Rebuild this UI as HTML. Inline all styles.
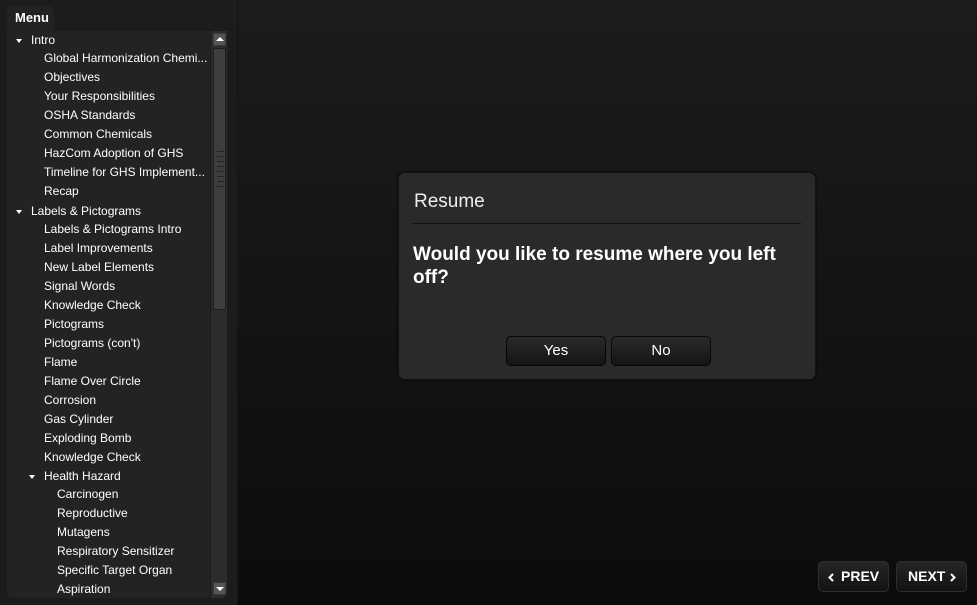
<!DOCTYPE html>
<html><head><meta charset="utf-8"><style>
*{margin:0;padding:0;box-sizing:border-box}
body{width:977px;height:605px;overflow:hidden;background:#0d0d0d;font-family:"Liberation Sans","DejaVu Sans",sans-serif;color:#fff;position:relative}
#main{position:absolute;left:238px;top:0;width:739px;height:605px;background:linear-gradient(#1c1c1c,#0c0c0c)}
#left{position:absolute;left:0;top:0;width:238px;height:605px;background:#1c1c1c;border-right:1px solid #151515}
#tab{position:absolute;left:7px;top:6px;width:47px;height:26px;background:#222;border-radius:5px 5px 0 0;font-size:13px;font-weight:bold;padding:4px 0 0 8px}
#list{position:absolute;left:7px;top:31px;width:220px;height:567px;background:#232323;border-radius:0 0 6px 6px;overflow:hidden}
#rows{position:absolute;left:0;top:1px}
.r{position:absolute;font-size:12px;white-space:nowrap;color:#fff;height:19px;line-height:19px}
.t{position:absolute;width:0;height:0;border-left:3.5px solid transparent;border-right:3.5px solid transparent;border-top:4px solid #fff}
#sb{position:absolute;left:203px;top:0;width:17px;height:567px;background:#2c2c2c;border-left:1px solid #1a1a1a}
.sbtn{position:absolute;left:2px;width:13px;height:13px;background:#555;border:1px solid #3a3a3a}
#thumb{position:absolute;left:2px;top:17px;width:13px;height:262px;background:#3e3e3e;border:1px solid #1e1e1e}
.g{position:absolute;left:3px;width:7px;height:1px;background:#222}
#dlg{position:absolute;left:398px;top:172px;width:418px;height:208px;background:#2a2a2a;border:1px solid #131313;border-radius:7px;box-shadow:0 0 2px #000}
.btn{position:absolute;height:30px;background:linear-gradient(#2a2a2a,#151515);border:1px solid #080808;border-radius:5px;font-size:15px;text-align:center;line-height:28px;color:#fff}
.nav{position:absolute;top:561px;height:31px;background:linear-gradient(#262626,#121212);border:1px solid #2e2e2e;border-radius:5px;font-size:14px;font-weight:bold;line-height:29px}
.nav span{position:absolute;top:0}
.nav svg{position:absolute;top:11px}
</style></head><body>
<div id="main"></div>
<div id="left">
<div id="tab">Menu</div>
<div id="list"><div id="rows">
<div class="t" style="left:9px;top:7px"></div><div class="r" style="left:24px;top:-1px">Intro</div>
<div class="r" style="left:37px;top:17px">Global Harmonization Chemi...</div>
<div class="r" style="left:37px;top:36px">Objectives</div>
<div class="r" style="left:37px;top:55px">Your Responsibilities</div>
<div class="r" style="left:37px;top:74px">OSHA Standards</div>
<div class="r" style="left:37px;top:93px">Common Chemicals</div>
<div class="r" style="left:37px;top:112px">HazCom Adoption of GHS</div>
<div class="r" style="left:37px;top:131px">Timeline for GHS Implement...</div>
<div class="r" style="left:37px;top:150px">Recap</div>
<div class="t" style="left:9px;top:178px"></div><div class="r" style="left:24px;top:170px">Labels &amp; Pictograms</div>
<div class="r" style="left:37px;top:188px">Labels &amp; Pictograms Intro</div>
<div class="r" style="left:37px;top:207px">Label Improvements</div>
<div class="r" style="left:37px;top:226px">New Label Elements</div>
<div class="r" style="left:37px;top:245px">Signal Words</div>
<div class="r" style="left:37px;top:264px">Knowledge Check</div>
<div class="r" style="left:37px;top:283px">Pictograms</div>
<div class="r" style="left:37px;top:302px">Pictograms (con't)</div>
<div class="r" style="left:37px;top:321px">Flame</div>
<div class="r" style="left:37px;top:340px">Flame Over Circle</div>
<div class="r" style="left:37px;top:359px">Corrosion</div>
<div class="r" style="left:37px;top:378px">Gas Cylinder</div>
<div class="r" style="left:37px;top:397px">Exploding Bomb</div>
<div class="r" style="left:37px;top:416px">Knowledge Check</div>
<div class="t" style="left:22px;top:443px"></div><div class="r" style="left:37px;top:435px">Health Hazard</div>
<div class="r" style="left:50px;top:453px">Carcinogen</div>
<div class="r" style="left:50px;top:472px">Reproductive</div>
<div class="r" style="left:50px;top:491px">Mutagens</div>
<div class="r" style="left:50px;top:510px">Respiratory Sensitizer</div>
<div class="r" style="left:50px;top:529px">Specific Target Organ</div>
<div class="r" style="left:50px;top:548px">Aspiration</div>
</div>
<div id="sb">
<div class="sbtn" style="top:2px"><div style="position:absolute;left:2px;top:3px;border-left:4px solid transparent;border-right:4px solid transparent;border-bottom:4px solid #fff"></div></div>
<div id="thumb">
<div class="g" style="top:102px"></div><div class="g" style="top:107px"></div><div class="g" style="top:112px"></div><div class="g" style="top:117px"></div><div class="g" style="top:122px"></div><div class="g" style="top:127px"></div><div class="g" style="top:132px"></div><div class="g" style="top:137px"></div>
</div>
<div class="sbtn" style="top:551px"><div style="position:absolute;left:2px;top:4px;border-left:4px solid transparent;border-right:4px solid transparent;border-top:4px solid #fff"></div></div>
</div>
</div>
</div>
<div id="dlg">
<div style="position:absolute;left:15px;top:18px;font-size:19px;color:#eee">Resume</div>
<div style="position:absolute;left:14px;top:50px;width:388px;height:1px;background:#111"></div>
<div style="position:absolute;left:14px;top:70px;width:390px;font-size:19px;font-weight:bold;line-height:23px">Would you like to resume where you left off?</div>
<div class="btn" style="left:107px;top:163px;width:100px">Yes</div>
<div class="btn" style="left:212px;top:163px;width:100px">No</div>
</div>
<div class="nav" style="left:818px;width:71px"><svg style="left:9px" width="6" height="9" viewBox="0 0 6 9"><path d="M5 1L1.5 4.5L5 8" stroke="#fff" stroke-width="2" fill="none"/></svg><span style="left:22px">PREV</span></div>
<div class="nav" style="left:896px;width:71px"><span style="left:11px">NEXT</span><svg style="left:53px" width="6" height="9" viewBox="0 0 6 9"><path d="M1 1L4.5 4.5L1 8" stroke="#fff" stroke-width="2" fill="none"/></svg></div>
</body></html>
